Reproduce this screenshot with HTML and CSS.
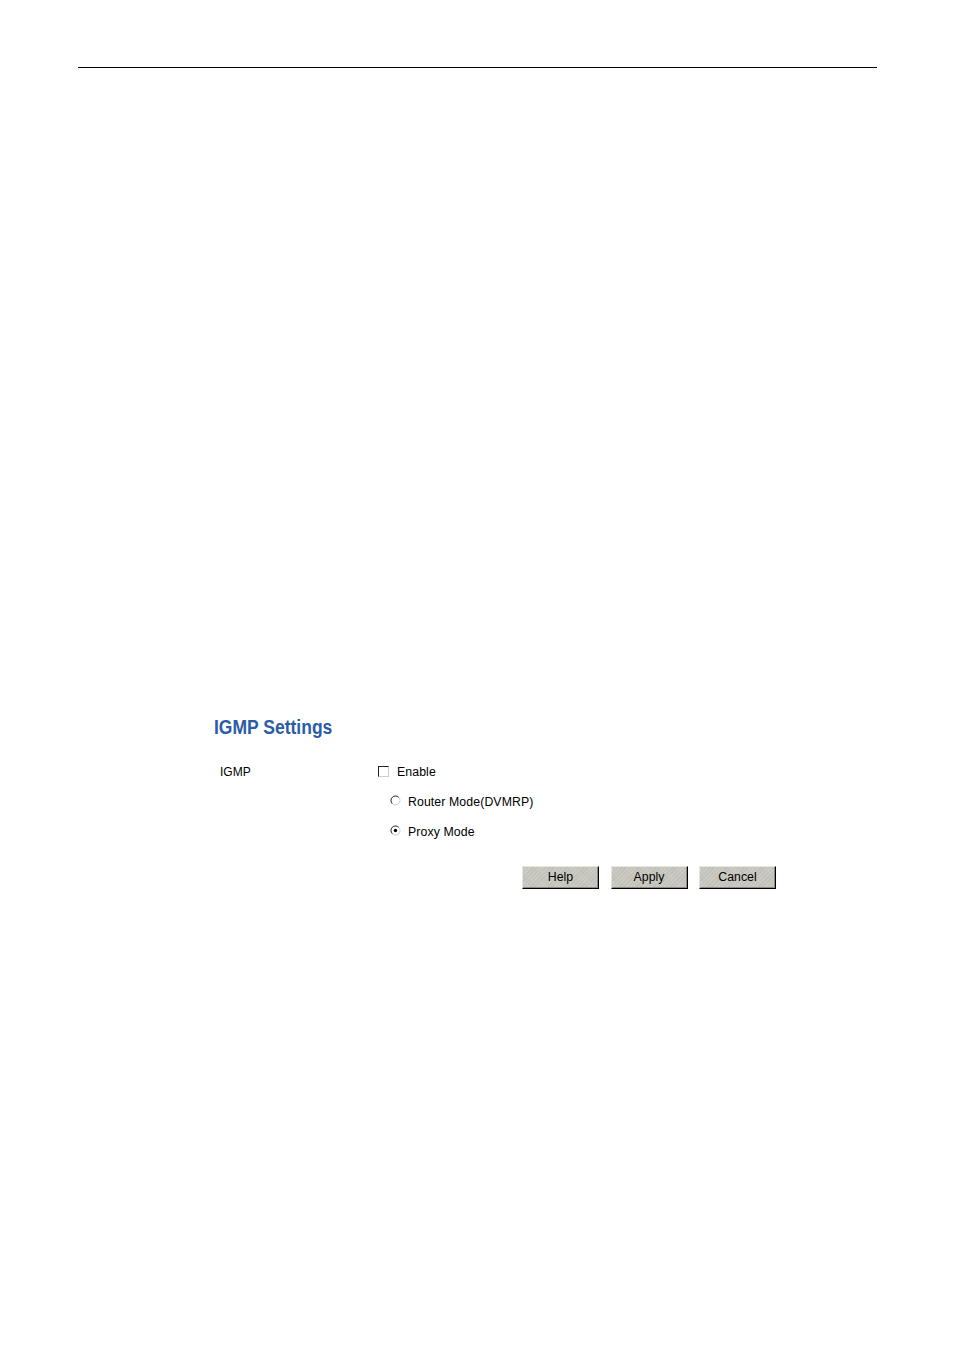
FILE: index.html
```html
<!DOCTYPE html>
<html>
<head>
<meta charset="utf-8">
<link rel="stylesheet" href="styles.css">
</head>
<body>
<div class="page">
  <div class="rule"></div>
  <div class="settings">
    <h2 class="title">IGMP Settings</h2>
    <div class="row">
      <div class="label">IGMP</div>
      <div class="options">
        <div class="opt"><span class="check"></span><span>Enable</span></div>
        <div class="opt sub">
          <svg class="radio" width="11" height="11" viewBox="0 0 11 11"><circle cx="5.5" cy="5.5" r="4.5" fill="#fff" stroke="#c8ccd4"/><path d="M2.3 8.7 A4.5 4.5 0 0 1 8.7 2.3" fill="none" stroke="#333" stroke-width="1"/></svg>
          <span>Router Mode(DVMRP)</span>
        </div>
        <div class="opt sub">
          <svg class="radio" width="11" height="11" viewBox="0 0 11 11"><circle cx="5.5" cy="5.5" r="4.5" fill="#fff" stroke="#c8ccd4"/><path d="M2.3 8.7 A4.5 4.5 0 0 1 8.7 2.3" fill="none" stroke="#333" stroke-width="1"/><circle cx="5.5" cy="5.5" r="1.7" fill="#000"/></svg>
          <span>Proxy Mode</span>
        </div>
      </div>
    </div>
    <div class="buttons">
      <button class="btn">Help</button>
      <button class="btn">Apply</button>
      <button class="btn">Cancel</button>
    </div>
  </div>
</div>
</body>
</html>
```
FILE: styles.css
```css
html, body {
  margin: 0;
  padding: 0;
  background: #fff;
}
body {
  font-family: "Liberation Sans", Arial, sans-serif;
  color: #000;
}
.page {
  width: 954px;
  height: 1351px;
  padding-top: 67px;
  box-sizing: border-box;
}
.rule {
  margin-left: 78px;
  width: 799px;
  height: 1px;
  background: #000;
}
.settings {
  margin-left: 214px;
  margin-top: 648px;
}
.title {
  margin: 0;
  font-size: 17.5px;
  line-height: 22px;
  font-weight: bold;
  color: #2b5ca6;
  transform: scaleY(1.12);
  transform-origin: left center;
}
.row {
  display: flex;
  margin-top: 19px;
}
.label {
  width: 158px;
  padding-left: 6px;
  font-size: 12px;
  line-height: 30px;
  height: 30px;
}
.options {
  display: flex;
  flex-direction: column;
}
.opt {
  display: flex;
  align-items: center;
  height: 30px;
  font-size: 12.3px;
  letter-spacing: 0.1px;
}
.opt.sub {
  padding-left: 12px;
}
.check {
  width: 9px;
  height: 9px;
  border: 1px solid;
  border-color: #202020 #c8ccd4 #c8ccd4 #202020;
  background: #fff;
  margin-right: 8px;
  margin-top: -2px;
}
.radio {
  margin-right: 7px;
  margin-top: -3px;
}
.buttons {
  display: flex;
  gap: 11.5px;
  margin-left: 308px;
  margin-top: 19px;
}
.btn {
  width: 77px;
  height: 23px;
  padding: 0 0 2px 0;
  font-family: "Liberation Sans", Arial, sans-serif;
  font-size: 12.3px;
  color: #000;
  background-color: #c6c6be;
  background-image:
    repeating-linear-gradient(45deg, rgba(255,255,255,0.12) 0 1px, transparent 1px 2px),
    repeating-linear-gradient(-45deg, rgba(120,120,110,0.12) 0 1px, transparent 1px 3px);
  border: 1px solid;
  border-color: #e6e6e0 #000 #000 #e6e6e0;
  box-shadow: inset -1px -1px 0 #8a8a84;
}
```
